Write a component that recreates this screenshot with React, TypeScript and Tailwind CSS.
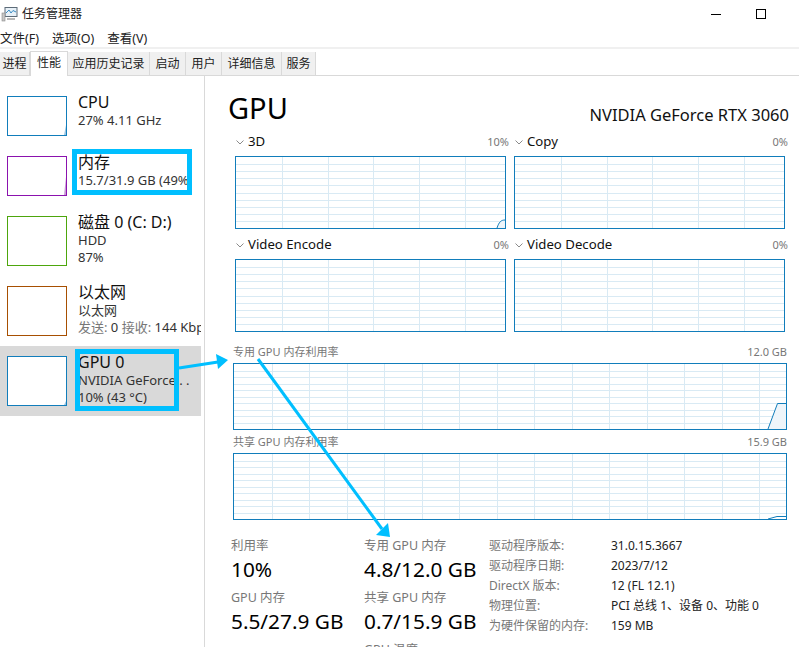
import type { ReactNode } from 'react'

const font = { fontFamily: '"Noto Sans", "Noto Sans CJK SC", sans-serif' }

const tabs = [
  { label: '进程', w: 'w-[30px]' },
  { label: '性能', w: 'w-[38px]', active: true },
  { label: '应用历史记录', w: 'w-[82px]' },
  { label: '启动', w: 'w-[36px]' },
  { label: '用户', w: 'w-[36px]' },
  { label: '详细信息', w: 'w-[60px]' },
  { label: '服务', w: 'w-[34px]' },
]

function Grid({ w, h, stepX, stepY = 10, children }: { w: number; h: number; stepX: number; stepY?: number; children?: ReactNode }) {
  const xs: number[] = []
  for (let x = stepX; x < w - 4; x += stepX) xs.push(Math.round(x) + 0.5)
  const ys: number[] = []
  for (let i = 1; i < stepY; i++) ys.push(Math.round((h * i) / stepY) + 0.5)
  return (
    <svg width={w} height={h} className="block">
      {xs.map((x) => (
        <line key={x} x1={x} x2={x} y1={0} y2={h} stroke="#d9eaf4" strokeWidth={1} />
      ))}
      {ys.map((y) => (
        <line key={y} x1={0} x2={w} y1={y} y2={y} stroke="#d9eaf4" strokeWidth={1} />
      ))}
      {children}
    </svg>
  )
}

function Chevron() {
  return (
    <svg width="8" height="5" viewBox="0 0 8 5" className="mr-[4px] shrink-0">
      <path d="M0.5 0.5 L4 4 L7.5 0.5" fill="none" stroke="#8a8a8a" strokeWidth="1" />
    </svg>
  )
}

function EngineChart({ title, pct, children }: { title: string; pct: string; children?: ReactNode }) {
  return (
    <div className="w-[271px]">
      <div className="flex h-[26px] items-center pb-[2px] pl-[1px]">
        <Chevron />
        <span className="text-[13.2px] text-[#111]">{title}</span>
        <span className="ml-auto translate-x-[3px] text-[11px] text-[#777]">{pct}</span>
      </div>
      <div className="h-[73px] border border-[#117dbb]">
        <Grid w={269} h={71} stepX={45.8}>
          {children}
        </Grid>
      </div>
    </div>
  )
}

function SideItem({ name, lines, color, tall, mark, selected, className = '' }: {
  name: string
  lines: ReactNode[]
  color: string
  tall?: boolean
  mark?: { h: number; fill: string }
  selected?: boolean
  className?: string
}) {
  const chartH = tall ? 48 : 38
  return (
    <div className={`flex h-[70px] w-[201px] items-start overflow-hidden pl-[7px] ${selected ? 'bg-[#d9d9d9]' : ''} ${className}`}>
      <div className={`w-[60px] shrink-0 border bg-white ${color} ${tall ? 'mt-[10px] h-[50px]' : 'mt-[15px] h-[40px]'}`}>
        <svg width={58} height={chartH} className="block">
          {mark && <path d={`M56 ${chartH} L58 ${chartH - mark.h} L58 ${chartH} Z`} fill={mark.fill} />}
        </svg>
      </div>
      <div className={`ml-[11px] min-w-0 whitespace-nowrap ${tall ? 'mt-[6px]' : 'mt-[11px]'}`}>
        <div className="text-[16px] leading-[20px] text-[#111]">{name}</div>
        {lines.map((l, i) => (
          <div key={i} className="text-[13px] leading-[17px] text-[#333]">{l}</div>
        ))}
      </div>
    </div>
  )
}

function Stat({ label, value }: { label: string; value: string }) {
  return (
    <div className="h-[52px]">
      <div className="text-[12.5px] leading-[16px] text-[#777]">{label}</div>
      <div className="text-[20.8px] leading-[30px] text-black">{value}</div>
    </div>
  )
}

const specs = [
  ['驱动程序版本:', '31.0.15.3667'],
  ['驱动程序日期:', '2023/7/12'],
  ['DirectX 版本:', '12 (FL 12.1)'],
  ['物理位置:', 'PCI 总线 1、设备 0、功能 0'],
  ['为硬件保留的内存:', '159 MB'],
]

export default function App() {
  return (
    <div className="relative flex h-[647px] w-[799px] flex-col overflow-hidden bg-white" style={font}>
      {/* Title bar */}
      <div className="flex h-[28px] items-center">
        <svg width="18" height="16" viewBox="0 0 18 16" className="ml-[1px]">
          <rect x="4" y="1.5" width="12" height="9" fill="#e8f1f8" stroke="#5c6b78" />
          <path d="M5 7 L8 4 L10 7 L12 4.5 L15 6" fill="none" stroke="#3a8dc4" strokeWidth="1" />
          <rect x="1" y="7" width="3" height="8" fill="#c7c7c7" stroke="#8a8a8a" strokeWidth="0.6" />
          <rect x="6" y="12" width="8" height="2" fill="#b8b8b8" />
        </svg>
        <span className="ml-[3px] text-[12px] text-[#222]">任务管理器</span>
        <div className="ml-auto flex items-center pr-[33px]">
          <div className="h-[1px] w-[10px] bg-black" />
          <div className="ml-[35px] h-[10px] w-[10px] border border-black" />
        </div>
      </div>

      {/* Menu */}
      <div className="flex h-[19px] items-center gap-[13px] pt-[3px] text-[12.5px] text-[#222]">
        <span>文件(F)</span>
        <span>选项(O)</span>
        <span>查看(V)</span>
      </div>
      <div className="h-[2px] bg-[#f0f0f0]" />

      {/* Tabs */}
      <div className="mt-[2px] flex h-[25px] items-end border-b border-[#d9d9d9]">
        {tabs.map((t) => (
          <div
            key={t.label}
            className={`flex items-center justify-center border-r border-[#d9d9d9] text-[12px] text-[#222] ${t.w} ${
              t.active ? 'relative z-10 -mb-px h-[25px] border-l border-t bg-white pb-[3px]' : 'h-[23px] bg-[#f0f0f0] pt-[1px]'
            }`}
          >
            {t.label}
          </div>
        ))}
      </div>

      <div className="flex min-h-0 flex-1">
        {/* Sidebar */}
        <div className="w-[204px] shrink-0 pt-[5px]">
          <div className="flex flex-col">
            <SideItem name="CPU" lines={['27% 4.11 GHz']} color="border-[#117dbb]" mark={{ h: 10, fill: '#9cc6e2' }} />
            <SideItem name="内存" lines={['15.7/31.9 GB (49%']} color="border-[#8b12ae]" mark={{ h: 18, fill: '#c89ad6' }} className="-mt-[10px]" />
            <SideItem name="磁盘 0 (C: D:)" lines={['HDD', '87%']} color="border-[#4da60c]" tall className="-mt-[5px]" />
            <SideItem name="以太网" lines={['以太网', <><span className="text-[#777]">发送:</span> 0 <span className="text-[#777]">接收:</span> 144 Kbp</>]} color="border-[#a74f01]" tall />
            <SideItem name="GPU 0" lines={['NVIDIA GeForce . .', '10% (43 °C)']} color="border-[#117dbb]" tall mark={{ h: 4, fill: '#9cc6e2' }} selected />
          </div>
        </div>

        {/* Detail */}
        <div className="min-w-0 flex-1 border-l border-[#d9d9d9] pl-[23px]">
          <div className="flex h-[54px] items-end pb-[1px] pr-[10px] pt-[10px]">
            <h1 className="text-[29px] leading-[43px] text-black">GPU</h1>
            <span className="ml-auto pb-[2px] text-[16.5px] leading-[24px] text-[#111]">NVIDIA GeForce RTX 3060</span>
          </div>

          <div className="grid w-[558px] grid-cols-[271px_271px] gap-x-[8px] pl-[7px]">
            <EngineChart title="3D" pct="10%">
              <path d="M261 71 C 263 65 265 63 269 63 L269 71 Z" fill="#eef5fa" stroke="none" />
              <path d="M261 71 C 263 65 265 63 269 63" fill="none" stroke="#117dbb" />
            </EngineChart>
            <EngineChart title="Copy" pct="0%" />
            <div className="mt-[4px]"><EngineChart title="Video Encode" pct="0%" /></div>
            <div className="mt-[4px]"><EngineChart title="Video Decode" pct="0%" /></div>
          </div>

          <div className="mt-[10px] w-[559px] pl-[5px]">
            <div className="flex h-[21px] items-center justify-between text-[11px] text-[#777]">
              <span>专用 GPU 内存利用率</span>
              <span>12.0 GB</span>
            </div>
            <div className="h-[67px] border border-[#117dbb]">
              <Grid w={552} h={65} stepX={37.5}>
                <path d="M534 65 L543.5 39.5 L552 39.5 L552 65 Z" fill="#eef5fa" />
                <path d="M534 65 L543.5 39.5 L552 39.5" fill="none" stroke="#117dbb" />
              </Grid>
            </div>
            <div className="flex h-[23px] items-center justify-between pt-[1px] text-[11px] text-[#777]">
              <span>共享 GPU 内存利用率</span>
              <span>15.9 GB</span>
            </div>
            <div className="h-[67px] border border-[#117dbb]">
              <Grid w={552} h={65} stepX={37.5}>
                <path d="M534 65 L543 62.5 L552 62.5" fill="none" stroke="#117dbb" />
              </Grid>
            </div>
          </div>

          {/* Stats */}
          <div className="mt-[18px] flex pl-[3px]">
            <div className="w-[133px]">
              <Stat label="利用率" value="10%" />
              <Stat label="GPU 内存" value="5.5/27.9 GB" />
            </div>
            <div className="w-[125px]">
              <Stat label="专用 GPU 内存" value="4.8/12.0 GB" />
              <Stat label="共享 GPU 内存" value="0.7/15.9 GB" />
              <div className="text-[12.5px] leading-[16px] text-[#777]">GPU 温度</div>
            </div>
            <div className="-mt-[2px] text-[12px]">
              {specs.map(([k, v]) => (
                <div key={k} className="flex h-[20px] items-center">
                  <span className="w-[122px] text-[#777]">{k}</span>
                  <span className="text-[#222]">{v}</span>
                </div>
              ))}
            </div>
          </div>
        </div>
      </div>

      {/* Annotation boxes and arrows drawn over the screenshot */}
      <div className="absolute left-[72px] top-[149px] h-[46px] w-[120px] border-[5px] border-[#00bfff]" />
      <div className="absolute left-[75px] top-[349px] h-[62px] w-[104px] border-[5px] border-[#00bfff]" />
      <svg width="799" height="647" className="pointer-events-none absolute left-0 top-0">
        <line x1="179" y1="368" x2="218" y2="362" stroke="#00bfff" strokeWidth="3" />
        <polygon points="228,360 216,354 218,369" fill="#00bfff" />
        <line x1="258" y1="359" x2="382" y2="529" stroke="#00bfff" strokeWidth="3" />
        <polygon points="390,537 376,535 388,523" fill="#00bfff" />
      </svg>
    </div>
  )
}
